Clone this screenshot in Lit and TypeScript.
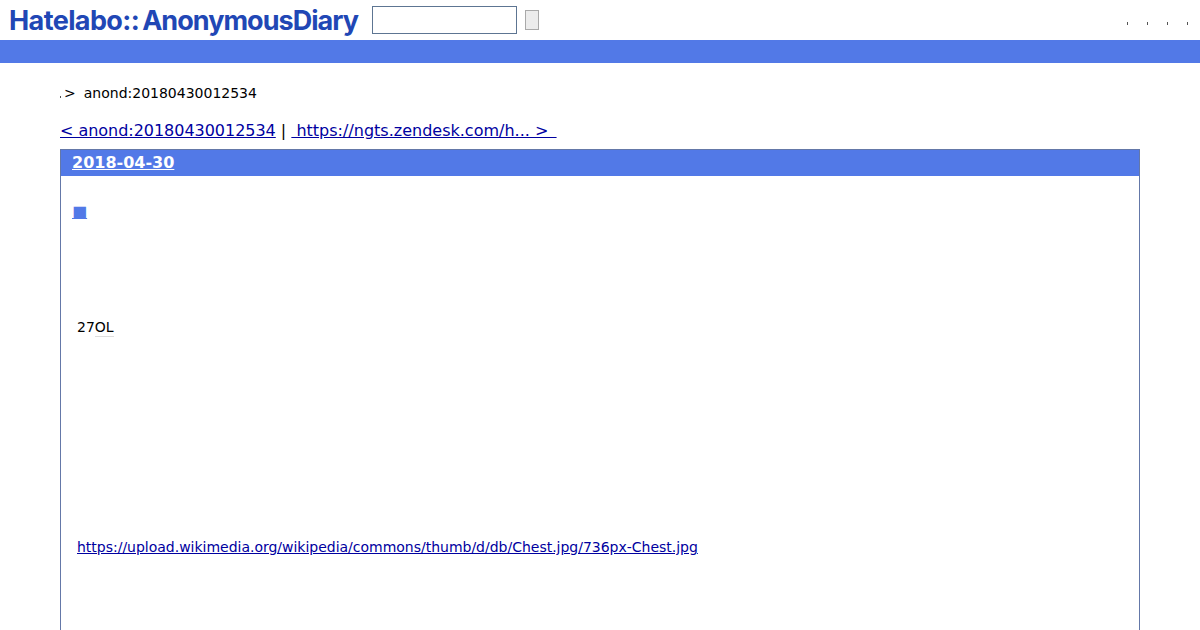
import { html, css, LitElement } from "lit";
import { customElement } from "lit/decorators.js";

const BLUE = css`#5279e7`;

@customElement("app-root")
export class AppRoot extends LitElement {
  static styles = css`
    :host {
      display: block;
      height: 630px;
      overflow: hidden;
      background: #fff;
      color: #000;
      font-family: "DejaVu Sans", sans-serif;
      font-size: 14px;
    }
    a { color: #0000a0; }
    .top {
      display: flex;
      align-items: center;
      height: 40px;
      padding-left: 9px;
      box-sizing: border-box;
    }
    .logo {
      display: flex;
      gap: 3px;
      width: 363px;
      font-family: "Inter", sans-serif;
      font-size: 27px;
      font-weight: 700;
      color: #2147b5;
      white-space: nowrap;
    }
    .logo .site { letter-spacing: -0.6px; }
    .logo .name { letter-spacing: -0.97px; }
    .search {
      width: 145px;
      height: 28px;
      box-sizing: border-box;
      border: 1px solid #5d7592;
      background: #fff;
      padding: 0;
      margin: 0;
    }
    .go {
      width: 14px;
      height: 20px;
      box-sizing: border-box;
      margin: 0 0 0 8px;
      padding: 0;
      border: 1px solid #a9a9a9;
      background: #ececec;
    }
    .tools {
      display: flex;
      gap: 19px;
      margin-left: auto;
      padding: 7px 12px 0 0;
    }
    .tools i {
      display: block;
      width: 1px;
      height: 3px;
      background: #555;
    }
    .bar { height: 23px; background: ${BLUE}; }
    .crumb {
      display: flex;
      align-items: center;
      height: 20px;
      margin: 20px 60px 0;
    }
    .crumb .dot {
      width: 1px;
      height: 2px;
      margin: 8px 3px 0 0;
      background: #555;
    }
    .crumb .arrow { margin-right: 8px; }
    .pager {
      margin: 18px 60px 0;
      height: 20px;
      line-height: 20px;
      font-size: 16px;
      white-space: pre;
    }
    .pager .prev { letter-spacing: -0.03px; }
    .day {
      margin: 8px 60px 0;
      height: 600px;
      border: 1px solid #6478a8;
      border-bottom: 0;
    }
    .day-head {
      margin: 0;
      height: 26px;
      line-height: 26px;
      padding-left: 11px;
      background: ${BLUE};
      font-size: 16px;
      font-weight: 700;
    }
    .day-head a { color: #fff; }
    .mark {
      margin: 26px 0 0 11px;
      height: 20px;
      line-height: 20px;
      font-size: 16px;
    }
    .mark a { color: ${BLUE}; }
    .line {
      margin: 0 0 0 16px;
      height: 20px;
      line-height: 20px;
    }
    .age { margin-top: 95px; }
    .age span { border-bottom: 1px solid #ddd; padding-bottom: 1px; }
    .url { margin-top: 200px; letter-spacing: -0.012px; }
  `;

  override render() {
    return html`
      <header class="top">
        <div class="logo"><span class="site">Hatelabo::</span><span class="name">AnonymousDiary</span></div>
        <input class="search" type="text" />
        <button class="go"></button>
        <div class="tools"><i></i><i></i><i></i><i></i></div>
      </header>
      <div class="bar"></div>
      <nav class="crumb">
        <span class="dot"></span>
        <span class="arrow">&gt;</span>
        <span>anond:20180430012534</span>
      </nav>
      <div class="pager"><a class="prev" href="#">&lt; anond:20180430012534</a> | <a href="#"> https://ngts.zendesk.com/h... &gt; &thinsp;</a></div>
      <section class="day">
        <h3 class="day-head"><a href="#">2018-04-30</a></h3>
        <div class="mark"><a href="#">■</a></div>
        <p class="line age">27<span>OL</span></p>
        <p class="line url"><a href="#">https://upload.wikimedia.org/wikipedia/commons/thumb/d/db/Chest.jpg/736px-Chest.jpg</a></p>
      </section>
    `;
  }
}
